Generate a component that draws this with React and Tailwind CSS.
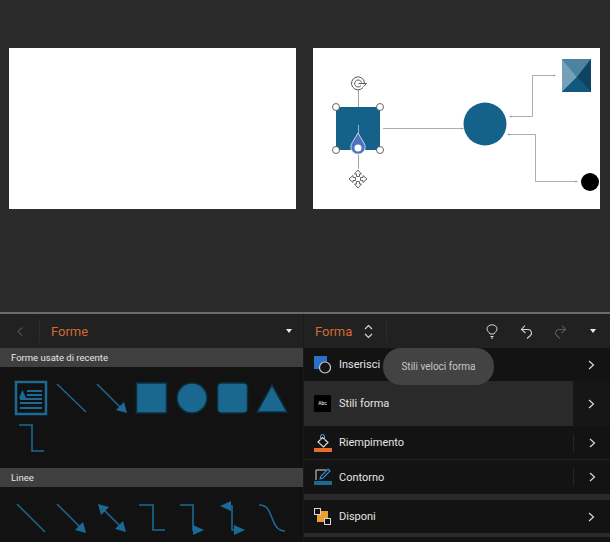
import React from "react";

const BLUE = "#1a6a94";
const FILL = "#1a6890";
const EDGE = "#0c2f40";

const Shape = ({ children }) => (
  <svg width="40" height="40" viewBox="0 0 40 40" fill="none" className="block shrink-0">
    {children}
  </svg>
);

const recent = [
  <Shape key="a">
    <rect x="2" y="4" width="30" height="32" stroke={BLUE} strokeWidth="2.5" />
    <path d="M13 13h15M13 17h15M6 21h22M6 25h22M6 30h22" stroke={BLUE} strokeWidth="1.8" />
    <path d="M5 20l3.500-8 3.500 8z" fill={BLUE} />
  </Shape>,
  <Shape key="b">
    <path d="M3 6l29 28" stroke={BLUE} strokeWidth="1.4" />
  </Shape>,
  <Shape key="c">
    <path d="M3 6l24 24" stroke={BLUE} strokeWidth="1.4" />
    <path d="M33 35l-11-3 8-8z" fill={BLUE} />
  </Shape>,
  <Shape key="d">
    <rect x="2.500" y="5" width="30" height="30" fill={FILL} stroke={EDGE} strokeWidth="1.5" />
  </Shape>,
  <Shape key="e">
    <circle cx="18" cy="20" r="15" fill={FILL} stroke={EDGE} strokeWidth="1.5" />
  </Shape>,
  <Shape key="f">
    <rect x="3.500" y="5" width="30" height="30" rx="4" fill={FILL} stroke={EDGE} strokeWidth="1.5" />
  </Shape>,
  <Shape key="g">
    <path d="M18 7l15 27H3z" fill={FILL} stroke={EDGE} strokeWidth="1.5" />
  </Shape>,
];

const lines = [
  <Shape key="a">
    <path d="M3 8l28 28" stroke={BLUE} strokeWidth="1.4" />
  </Shape>,
  <Shape key="b">
    <path d="M3 8l24 24" stroke={BLUE} strokeWidth="1.4" />
    <path d="M32 37l-11-3 8-8z" fill={BLUE} />
  </Shape>,
  <Shape key="c">
    <path d="M8 12l20 20" stroke={BLUE} strokeWidth="1.6" />
    <path d="M4 8l11 3-8 8zM32 36l-11-3 8-8z" fill={BLUE} />
  </Shape>,
  <Shape key="d">
    <path d="M5 9h14v25h12" stroke={BLUE} strokeWidth="1.6" />
  </Shape>,
  <Shape key="e">
    <path d="M6 9h13v25h4" stroke={BLUE} strokeWidth="1.6" />
    <path d="M30 34l-11 5v-10z" fill={BLUE} />
  </Shape>,
  <Shape key="f">
    <path d="M14 10h4v24h4" stroke={BLUE} strokeWidth="1.6" />
    <path d="M6 10l11-5v10zM31 34l-11 5v-10z" fill={BLUE} />
  </Shape>,
  <Shape key="g">
    <path d="M5 9c9 0 10 6 13 13s5 13 13 13" stroke={BLUE} strokeWidth="1.6" />
  </Shape>,
];

const Caret = () => (
  <svg width="6" height="4" viewBox="0 0 6 4" className="block">
    <path d="M0 0h6L3 4z" fill="#ececec" />
  </svg>
);

const Chevron = () => (
  <svg width="7" height="10" viewBox="0 0 7 10" fill="none" className="block">
    <path d="M1 1l4.500 4L1 9" stroke="#d8d8d8" strokeWidth="1.2" />
  </svg>
);

const SectionLabel = ({ children }) => (
  <div className="h-[19px] bg-[#3f3f3f] pl-[11px] text-[9.5px] leading-[19px] text-[#e6e6e6]">{children}</div>
);

const MenuRow = ({ icon, label, className = "", divider, chevronClass = "" }) => (
  <div className={`flex items-center ${className}`}>
    <div className="flex w-[35px] shrink-0 items-center justify-center pl-[2px]">{icon}</div>
    <span className="mt-[2px] flex-1 text-[11px] text-[#e4e4e4]">{label}</span>
    <div className={`flex h-full w-[37px] items-center justify-center ${chevronClass}`}>
      {divider && <div className="mr-auto h-[18px] w-px bg-[#262626]" />}
      <div className={divider ? "mr-[14px]" : ""}>
        <Chevron />
      </div>
    </div>
  </div>
);

// slide with the selected shape and connectors
const SlideDrawing = () => (
  <svg width="287" height="161" viewBox="0 0 287 161" className="block">
    <rect width="287" height="161" fill="#fff" />
    {/* connectors */}
    <g fill="none" stroke="#8f9aa3" strokeWidth="0.8">
      <path d="M70 80.500h79" />
      <path d="M198 68.500h21.500V27.500H241" />
      <path d="M196 86.500h26.500v47H263" />
    </g>
    <path d="M151 80.500l-2.500-1v2zM243 27.500l-2.500-1v2zM196 68.500l2.500-1v2zM194 86.500l2.500-1v2zM265 133.500l-2.500-1v2z" fill="#8f9aa3" />
    <circle cx="172" cy="76" r="21.500" fill="#14618a" />
    <circle cx="277" cy="134" r="9" fill="#000" />
    {/* bevel square */}
    <path d="M249 11h29v33h-29z" fill="#14618a" />
    <path d="M249 11h29l-14 18z" fill="#4b83a1" />
    <path d="M249 11l15 18-15 15z" fill="#74a0b8" />
    <path d="M278 11v33l-14-15z" fill="#0e4462" />
    <path d="M249 44l15-15 14 15z" fill="#12587e" />
    {/* selected shape */}
    <path d="M45.500 42v17" stroke="#8a8a8a" strokeWidth="0.8" />
    <path d="M45.500 107v14" stroke="#8a8a8a" strokeWidth="0.8" />
    <rect x="23" y="59" width="44" height="43" fill="#14618a" />
    <path d="M45.500 77v9" stroke="#a9c6e8" strokeWidth="0.8" />
    <path d="M45 85l6 10a7.200 7.200 0 1 1-12 0z" fill="#4f74bd" stroke="#e6ecf7" strokeWidth="0.8" />
    <circle cx="45" cy="100" r="3.500" fill="#fff" />
    <g fill="#fff" stroke="#555" strokeWidth="0.9">
      <circle cx="23" cy="59" r="3.500" />
      <circle cx="67" cy="59" r="3.500" />
      <circle cx="23" cy="102" r="3.500" />
      <circle cx="67" cy="102" r="3.500" />
    </g>
    {/* rotate handle */}
    <g fill="none" stroke="#555" strokeWidth="1">
      <path d="M50 39.500a6.500 6.500 0 1 1 1.500-4.500" />
      <path d="M48 37.500a3.500 3.500 0 1 1 .5-3" />
      <path d="M45.500 35.500h8l-3 3" />
    </g>
    {/* move handle */}
    <g fill="#fff" stroke="#666" strokeWidth="1">
      <path d="M45 122l3.500 4h-2v2.500h-3V126h-2z" />
      <path d="M45 140l3.500-4h-2v-2.500h-3v2.500h-2z" />
      <path d="M36 131l4-3.500v2h2.500v3H40v2z" />
      <path d="M54 131l-4-3.500v2h-2.500v3H50v2z" />
    </g>
  </svg>
);

export default function App() {
  return (
    <div className="relative flex h-[542px] w-[610px] flex-col overflow-hidden bg-[#2b2b2b] font-['Roboto',sans-serif]">
      <div className="flex h-[312px] shrink-0 gap-[17px] pl-[9px] pt-[48px]">
        <div className="h-[161px] w-[287px] bg-white" />
        <SlideDrawing />
      </div>
      <div className="h-[2px] shrink-0 bg-[#6a6a6a]" />
      <div className="flex flex-1">
        {/* left panel */}
        <div className="flex w-[304px] shrink-0 flex-col border-r border-[#1a1a1a] bg-[#121212]">
          <div className="flex h-[34px] shrink-0 items-center bg-[#212121]">
            <div className="flex h-[24px] w-[40px] items-center justify-center border-r border-[#2b2b2b]">
              <svg width="6" height="9" viewBox="0 0 6 9" fill="none">
                <path d="M5 .5l-4 4 4 4" stroke="#6f6f6f" strokeWidth="1" />
              </svg>
            </div>
            <span className="ml-[11px] mt-[1px] flex-1 text-[13px] text-[#d06a32]">Forme</span>
            <div className="mr-[11px]">
              <Caret />
            </div>
          </div>
          <SectionLabel>Forme usate di recente</SectionLabel>
          <div className="flex flex-col pl-[14px] pt-[11px]">
            <div className="flex">
              {recent.map((s, i) => (
                <div key={i} className="w-[40px]">
                  {s}
                </div>
              ))}
            </div>
            <div className="mt-[1px]">
              <Shape>
                <path d="M5 6h13v26h12" stroke={BLUE} strokeWidth="1.6" />
              </Shape>
            </div>
          </div>
          <div className="mt-auto">
            <SectionLabel>Linee</SectionLabel>
            <div className="flex h-[55px] pl-[14px] pt-[9px]">
              {lines.map((s, i) => (
                <div key={i} className="w-[40px]">
                  {s}
                </div>
              ))}
            </div>
          </div>
        </div>
        {/* right panel */}
        <div className="flex flex-1 flex-col bg-[#2a2a2a]">
          <div className="flex h-[34px] shrink-0 items-center bg-[#212121]">
            <span className="ml-[11px] mt-[1px] text-[13px] text-[#d06a32]">Forma</span>
            <svg width="9" height="15" viewBox="0 0 9 15" fill="none" className="ml-[12px]">
              <path d="M1 5l3.500-3.500L8 5M1 10l3.500 3.500L8 10" stroke="#d8d8d8" strokeWidth="1.100" />
            </svg>
            <div className="ml-[13px] h-[22px] w-px bg-[#2b2b2b]" />
            <div className="ml-auto flex items-center">
              <svg width="12" height="15" viewBox="0 0 12 15" fill="none" className="mr-[22px]">
                <path d="M4 10C3 8 1 7 1 4.800a5 4 0 0 1 10 0C11 7 9 8 8 10zM4.500 12.500h3M5 14h2" stroke="#d8d8d8" strokeWidth="1" />
              </svg>
              <svg width="13" height="15" viewBox="0 0 13 15" fill="none" className="mr-[21px]">
                <path d="M5 1.500L1.500 5.500 5.500 9M1.500 5.500H8a3.500 3.500 0 0 1 2.500 6L7 14.500" stroke="#d0d0d0" strokeWidth="1.100" />
              </svg>
              <svg width="13" height="15" viewBox="0 0 13 15" fill="none" className="mr-[23px]">
                <path d="M8 1.500l3.500 4L7.500 9M11.500 5.500H5a3.500 3.500 0 0 0-2.500 6L6 14.500" stroke="#5a5a5a" strokeWidth="1.100" />
              </svg>
              <div className="mr-[14px]">
                <Caret />
              </div>
            </div>
          </div>
          <MenuRow
            className="h-[33px] bg-[#131313]"
            label="Inserisci"
            icon={
              <svg width="17" height="18" viewBox="0 0 17 18" fill="none">
                <rect x="0" y="0" width="13" height="13" fill="#2a70c4" />
                <circle cx="11" cy="11.500" r="5.500" fill="#131313" stroke="#c8c8c8" strokeWidth="1.200" />
              </svg>
            }
          />
          <MenuRow
            className="h-[45px]"
            label="Stili forma"
            chevronClass="bg-[#161616]"
            icon={
              <div className="flex h-[17px] w-[17px] items-center justify-center rounded-[1px] bg-black text-[5px] text-white">Abc</div>
            }
          />
          <MenuRow
            className="h-[34px] border-b border-[#222] bg-[#131313]"
            label="Riempimento"
            divider
            icon={
              <svg width="18" height="18" viewBox="0 0 18 18" fill="none">
                <path d="M8.500 3.500l5.500 5-4.500 4.500-5.500-5z" fill="#131313" stroke="#e0e0e0" strokeWidth="1.100" />
                <path d="M6.500 6V2.500a2 2 0 0 1 4 0V6" stroke="#6fa4dc" strokeWidth="1" />
                <rect y="14" width="18" height="4" fill="#e56f2b" />
              </svg>
            }
          />
          <MenuRow
            className="h-[34px] bg-[#131313]"
            label="Contorno"
            divider
            icon={
              <svg width="18" height="18" viewBox="0 0 18 18" fill="none">
                <path d="M12 2H2v10" stroke="#d8d8d8" strokeWidth="1" />
                <path d="M6 11l1-3 7-7 2 2-7 7z" stroke="#3d8fd0" strokeWidth="1.100" />
                <rect y="13" width="18" height="4" fill="#1a6a94" />
              </svg>
            }
          />
          <div className="h-[6px] shrink-0" />
          <MenuRow
            className="h-[33px] bg-[#131313]"
            label="Disponi"
            icon={
              <svg width="17" height="17" viewBox="0 0 17 17" fill="none">
                <rect x="3" y="3" width="11" height="11" fill="#eba12f" />
                <rect x="0.500" y="0.500" width="6" height="6" fill="#131313" stroke="#d8d8d8" />
                <rect x="10.500" y="10.500" width="6" height="6" fill="#131313" stroke="#d8d8d8" />
              </svg>
            }
          />
          <div className="h-[4px] shrink-0" />
          <div className="flex-1 bg-[#131313]" />
        </div>
      </div>
      {/* tooltip */}
      <div className="absolute left-[383px] top-[348px] flex h-[37px] w-[111px] items-center justify-center rounded-[18px] bg-[#434343] text-[10px] text-[#c8c8c8]">
        Stili veloci forma
      </div>
    </div>
  );
}
